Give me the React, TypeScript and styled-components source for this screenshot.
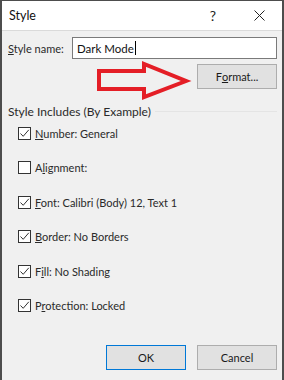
import React from 'react';
import styled, { createGlobalStyle } from 'styled-components';

const GlobalStyles = createGlobalStyle`
  html, body {
    margin: 0;
    padding: 0;
    background: #4d4d4d;
  }
  body {
    font-family: Lato, 'Noto Sans', sans-serif;
    font-size: 11px;
    color: #2a2a2a;
  }
`;

const Dialog = styled.div`
  margin: 1px 2px 0 2px;
  height: 379px;
  background: #f0f0f0;
  display: flex;
  flex-direction: column;
`;

const TitleBar = styled.div`
  height: 29px;
  background: #ffffff;
  border-bottom: 1px solid #dadada;
  display: flex;
  align-items: center;
  padding-left: 7px;
`;

const Title = styled.span`
  flex: 1;
  font-size: 12.5px;
  color: #111;
`;

const TitleButton = styled.span`
  width: 46px;
  display: flex;
  justify-content: center;
  align-items: center;
  font-size: 14px;
  color: #222;
`;

const Body = styled.div`
  flex: 1;
  display: flex;
  flex-direction: column;
  padding: 0 5px 0 6px;
`;

const NameRow = styled.div`
  margin-top: 6px;
  display: flex;
  align-items: center;
`;

const Label = styled.label`
  width: 64px;
`;

const TextInput = styled.div`
  flex: 1;
  height: 20px;
  border: 1px solid #7a7a7a;
  background: #fff;
  display: flex;
  align-items: center;
  padding-left: 4px;
  font-size: 11.5px;
  color: #111;
`;

const Caret = styled.span`
  display: inline-block;
  width: 1px;
  height: 14px;
  background: #000;
  margin-left: 1px;
`;

const FormatRow = styled.div`
  margin-top: 5px;
  display: flex;
  align-items: center;
  justify-content: flex-end;
  gap: 8px;
`;

const Arrow = styled.svg`
  overflow: visible;
`;

const Button = styled.div<{ $default?: boolean }>`
  width: 78px;
  height: 23px;
  background: #e1e1e1;
  border: 1px solid ${(p) => (p.$default ? '#0078d7' : '#adadad')};
  display: flex;
  align-items: center;
  justify-content: center;
  color: #1a1a1a;
`;

const GroupHeader = styled.div`
  margin-top: 14px;
  height: 16px;
  display: flex;
  align-items: center;
  gap: 4px;
  font-size: 12px;
  &::after {
    content: '';
    flex: 1;
    height: 1px;
    background: #e4e4e4;
  }
`;

const List = styled.div`
  margin-top: 4px;
  padding-left: 10px;
  display: flex;
  flex-direction: column;
  gap: 14.6px;
`;

const Item = styled.div`
  height: 20px;
  display: flex;
  align-items: center;
  gap: 4px;
  font-size: 11px;
`;

const Box = styled.span`
  width: 11px;
  height: 11px;
  border: 1px solid #333;
  background: #fff;
  display: flex;
  align-items: center;
  justify-content: center;
`;

const Footer = styled.div`
  margin-top: auto;
  margin-bottom: 10px;
  display: flex;
  justify-content: flex-end;
  gap: 11px;
`;

const items: { pre: string; key: string; post: string; checked: boolean }[] = [
  { pre: '', key: 'N', post: 'umber: General', checked: true },
  { pre: 'A', key: 'l', post: 'ignment:', checked: false },
  { pre: '', key: 'F', post: 'ont: Calibri (Body) 12, Text 1', checked: true },
  { pre: '', key: 'B', post: 'order: No Borders', checked: true },
  { pre: 'F', key: 'i', post: 'll: No Shading', checked: true },
  { pre: 'P', key: 'r', post: 'otection: Locked', checked: true },
];

function Check() {
  return (
    <svg width="11" height="11" viewBox="0 0 11 11">
      <path d="M1.5 5.5 L4.2 8.3 L9.8 1.8" fill="none" stroke="#333" strokeWidth="1" />
    </svg>
  );
}

export default function App() {
  return (
    <>
      <GlobalStyles />
      <Dialog>
        <TitleBar>
          <Title>Style</Title>
          <TitleButton>?</TitleButton>
          <TitleButton>
            <svg width="11" height="11" viewBox="0 0 11 11">
              <path d="M0.5 0.5 L10.5 10.5 M10.5 0.5 L0.5 10.5" stroke="#222" strokeWidth="1" />
            </svg>
          </TitleButton>
        </TitleBar>
        <Body>
          <NameRow>
            <Label>
              <u>S</u>tyle name:
            </Label>
            <TextInput>
              Dark Mode
              <Caret />
            </TextInput>
          </NameRow>
          <FormatRow>
            <Arrow width="92" height="25" viewBox="0 0 92 25">
              <polygon
                points="2,7 47,7 47,0 89,17 47,33 47,25 2,25"
                fill="none"
                stroke="#e41e26"
                strokeWidth="4"
                strokeLinejoin="miter"
              />
            </Arrow>
            <Button>
              F<u>o</u>rmat...
            </Button>
          </FormatRow>
          <GroupHeader>Style Includes (By Example)</GroupHeader>
          <List>
            {items.map((it) => (
              <Item key={it.post}>
                <Box>{it.checked && <Check />}</Box>
                <span>
                  {it.pre}
                  <u>{it.key}</u>
                  {it.post}
                </span>
              </Item>
            ))}
          </List>
          <Footer>
            <Button $default>OK</Button>
            <Button>Cancel</Button>
          </Footer>
        </Body>
      </Dialog>
    </>
  );
}
